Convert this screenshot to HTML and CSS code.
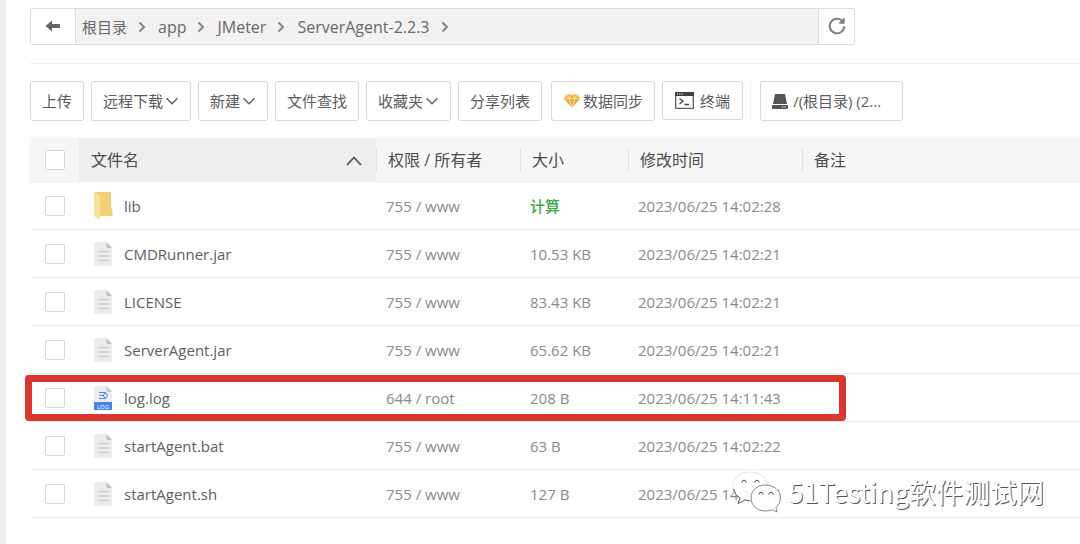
FILE: index.html
```html
<!DOCTYPE html>
<html lang="zh-CN">
<head>
<meta charset="utf-8">
<title>文件管理</title>
<link rel="stylesheet" href="styles.css">
</head>
<body>
<svg class="defs" width="0" height="0" aria-hidden="true">
  <symbol id="chevron-right" viewBox="0 0 8 12"><path d="M1.500 1.500 6 6 1.500 10.500" fill="none" stroke="#808080" stroke-width="1.900"/></symbol>
  <symbol id="chevron-down" viewBox="0 0 14 10"><path d="M1.500 2.200 7 7.700l5.500-5.500" fill="none" stroke="#666" stroke-width="1.600"/></symbol>
  <symbol id="file" viewBox="0 0 20 26"><path d="M1 1h12l6 6v18H1z" fill="#ececec"/><path d="M13 1l6 6h-5z" fill="#bcbcbc"/><path d="M5 10.500h11M5 15h11M5 19.500h11" stroke="#d0d0d0" stroke-width="1.300"/></symbol>
</svg>
<main class="page">
  <nav class="path" aria-label="路径">
    <button class="path-btn back" type="button" aria-label="返回"><svg width="16" height="12" viewBox="0 0 16 12"><path d="M0.500 6 7 .5v3.500h8v4H7v3.500z" fill="#666"/></svg></button>
    <ol class="crumbs">
      <li><a class="root" href="#">根目录</a><svg width="8" height="12"><use href="#chevron-right"/></svg></li>
      <li><a href="#">app</a><svg width="8" height="12"><use href="#chevron-right"/></svg></li>
      <li><a href="#">JMeter</a><svg width="8" height="12"><use href="#chevron-right"/></svg></li>
      <li><a href="#">ServerAgent-2.2.3</a><svg width="8" height="12"><use href="#chevron-right"/></svg></li>
    </ol>
    <button class="path-btn reload" type="button" aria-label="刷新"><svg width="20" height="20" viewBox="0 0 20 20"><path d="M15.500 5.200A7.300 7.300 0 1 0 17.300 10.300" fill="none" stroke="#808080" stroke-width="2"/><path d="M17.200 2.200v5h-5z" fill="#808080" stroke="#808080"/></svg></button>
  </nav>

  <div class="toolbar">
    <button class="btn" type="button">上传</button>
    <button class="btn" type="button">远程下载<svg width="14" height="10"><use href="#chevron-down"/></svg></button>
    <button class="btn" type="button">新建<svg width="14" height="10"><use href="#chevron-down"/></svg></button>
    <button class="btn" type="button">文件查找</button>
    <button class="btn" type="button">收藏夹<svg width="14" height="10"><use href="#chevron-down"/></svg></button>
    <button class="btn" type="button">分享列表</button>
    <span class="group">
      <button class="btn" type="button"><svg width="18" height="14" viewBox="0 0 18 14"><path d="M4 .5h10l3.500 4L9 13.800.5 4.500z" fill="#eeb13c"/><path d="M.5 4.500h17M4 .5l2 4 3 9 3-9 2-4M6 4.500l3-4 3 4" fill="none" stroke="#fbe3ae" stroke-width=".8"/></svg>数据同步</button>
      <button class="btn terminal" type="button"><svg width="19" height="17" viewBox="0 0 19 17"><path d="M.7.700h17.600v15.600H.7z" fill="#fff" stroke="#5a5f66" stroke-width="1.300"/><path d="M0 0h19v4H0z" fill="#3c3f44"/><path d="M2 2h1.200M4.200 2h1.200M6.400 2h1.200" stroke="#fff"/><path d="M4.500 6.500 8 9.300l-3.500 2.800M9.500 12.500H14" fill="none" stroke="#444" stroke-width="1.300"/></svg>终端</button>
    </span>
    <span class="disk">
      <button class="btn drive" type="button"><svg width="16" height="15" viewBox="0 0 16 15"><path d="M3 0h10l2 10H1z" fill="#555"/><path d="M1 11h14q1 0 1 1v2q0 1-1 1H1q-1 0-1-1v-2q0-1 1-1z" fill="#555"/><path d="M10 13h1.300M12.500 13h1.300" stroke="#fff"/></svg>/(根目录) (2...</button>
    </span>
  </div>

  <div class="files">
    <table>
      <colgroup><col class="c-check"><col class="c-name"><col class="c-perm"><col class="c-size"><col class="c-time"><col></colgroup>
      <thead>
        <tr>
          <th><input type="checkbox" aria-label="全选"></th>
          <th class="sorted"><span class="sort">文件名<svg width="20" height="12" viewBox="0 0 20 12"><path d="M3 11 10 3.500l7 7.500" fill="none" stroke="#555" stroke-width="1.800"/></svg></span></th>
          <th class="div">权限 / 所有者</th><th class="div">大小</th><th class="div">修改时间</th><th class="div">备注</th>
        </tr>
      </thead>
      <tbody>
        <tr><td><input type="checkbox" aria-label="lib"></td><td><span class="name"><svg width="20" height="30" viewBox="0 0 20 30"><path d="M1 1h16q1 0 1 1v15l1.500 2v6H7z" fill="#f0d078"/><path d="M1 1l5 3.500q1 1 1 2V29l-6-4z" fill="#f9e19a"/></svg>lib</span></td><td>755 / www</td><td><a class="calc" href="#">计算</a></td><td>2023/06/25 14:02:28</td><td></td></tr>
        <tr><td><input type="checkbox" aria-label="CMDRunner.jar"></td><td><span class="name"><svg width="20" height="26"><use href="#file"/></svg>CMDRunner.jar</span></td><td>755 / www</td><td>10.53 KB</td><td>2023/06/25 14:02:21</td><td></td></tr>
        <tr><td><input type="checkbox" aria-label="LICENSE"></td><td><span class="name"><svg width="20" height="26"><use href="#file"/></svg>LICENSE</span></td><td>755 / www</td><td>83.43 KB</td><td>2023/06/25 14:02:21</td><td></td></tr>
        <tr><td><input type="checkbox" aria-label="ServerAgent.jar"></td><td><span class="name"><svg width="20" height="26"><use href="#file"/></svg>ServerAgent.jar</span></td><td>755 / www</td><td>65.62 KB</td><td>2023/06/25 14:02:21</td><td></td></tr>
        <tr><td><input type="checkbox" aria-label="log.log"></td><td><span class="name"><svg width="20" height="26" viewBox="0 0 20 26"><path d="M1 1h12l6 6v10H1z" fill="#ececec"/><path d="M13 1l6 6h-5z" fill="#c4c4c4"/><path d="M6 7.500h7M6 10.500h5M6 13.500h7" stroke="#4d86e0" stroke-width="1.200"/><circle cx="12.500" cy="10.500" r="2" fill="none" stroke="#4d86e0"/><path d="M1 17h18v8H1z" fill="#4485ea"/><text class="badge" x="10" y="23.500" text-anchor="middle">LOG</text></svg>log.log</span></td><td>644 / root</td><td>208 B</td><td>2023/06/25 14:11:43</td><td></td></tr>
        <tr><td><input type="checkbox" aria-label="startAgent.bat"></td><td><span class="name"><svg width="20" height="26"><use href="#file"/></svg>startAgent.bat</span></td><td>755 / www</td><td>63 B</td><td>2023/06/25 14:02:22</td><td></td></tr>
        <tr><td><input type="checkbox" aria-label="startAgent.sh"></td><td><span class="name"><svg width="20" height="26"><use href="#file"/></svg>startAgent.sh</span></td><td>755 / www</td><td>127 B</td><td>2023/06/25 14:11:15</td><td></td></tr>
      </tbody>
    </table>
    <div class="highlight"></div>
  </div>
</main>
<div class="watermark">
  <svg width="50" height="42" viewBox="0 0 50 42"><path d="M17.500 1C8 1 1 7 1 15c0 5 2.500 9 7 12l-2 5.500 7-3.500q3 1 7 .8L36 14C34 6 27 1 17.500 1z" fill="#fff" fill-opacity=".9" stroke="#ccc" stroke-width=".5"/><path d="M1.500 18q1 5.500 6.500 9l-2 5.500 7-3.500 5 .8" fill="none" stroke="#555" stroke-width=".9"/><path d="M33.500 14C25 14 19 19.500 19 27s6.500 13 14.500 13q4 0 7-1.200l4.500 2.200-1-4.500q4.500-4 4.500-9.500C48.500 19.500 42 14 33.500 14z" fill="#fff" fill-opacity=".9" stroke="#666" stroke-width=".8"/><g fill="none" stroke="#444"><path d="M10 11.500v-1q2-3 4 0v1M23 11.500v-1q2-3 4 0v1M27 23.500v-1q2-3 4 0v1M37 23.500v-1q2-3 4 0v1"/></g></svg>
  <span>51Testing软件测试网</span>
</div>
</body>
</html>
```
FILE: styles.css
```css
* { box-sizing: border-box; }

body {
  margin: 0;
  min-height: 100vh;
  position: relative;
  background: #fefefe;
  border-left: 6px solid #f0f0f0;
  color: #5c5c5c;
  font: 15px/20px "Open Sans", "Noto Sans CJK SC", sans-serif;
}

svg { display: block; flex: none; }
.defs { position: absolute; }
a { color: inherit; text-decoration: none; }

button {
  font: inherit;
  color: inherit;
  background: #fff;
  cursor: pointer;
}

.page { padding: 8px 0 0 24px; }

.path {
  display: flex;
  width: 825px;
  max-width: 100%;
  height: 37px;
  border: 1px solid #dcdcdc;
  border-radius: 2px;
  background: #f2f2f2;
}

.path-btn {
  display: flex;
  align-items: center;
  justify-content: center;
  padding: 0 0 2px;
  border: 0;
}

.back { width: 45px; border-right: 1px solid #dcdcdc; }
.reload { width: 36px; border-left: 1px solid #dcdcdc; }

.crumbs {
  display: flex;
  flex: 1;
  align-items: center;
  gap: 12px;
  margin: 0;
  padding: 0 6px;
  list-style: none;
  font-size: 16px;
  color: #686868;
}

.crumbs li { display: flex; align-items: center; gap: 11px; }
.root { font-size: 15px; }

.toolbar {
  display: flex;
  gap: 7px;
  margin-top: 18px;
  padding: 17px 0;
  border-top: 1px solid #eee;
}

.btn {
  display: flex;
  align-items: center;
  gap: 2px;
  height: 40px;
  padding: 0 11px;
  border: 1px solid #d9d9d9;
  border-radius: 3px;
  white-space: nowrap;
}

.group { display: flex; gap: 7px; margin-left: 2px; }
.terminal { gap: 6px; height: 39px; padding: 0 12px; }
.disk { padding-left: 9px; border-left: 1px solid #f0f0f0; }
.drive { gap: 5px; width: 143px; }

.files { position: relative; }

table { width: 100%; border-collapse: separate; border-spacing: 0; table-layout: fixed; }
.c-check { width: 49px; }
.c-name { width: 297px; }
.c-perm { width: 144px; }
.c-size { width: 108px; }
.c-time { width: 174px; }

th {
  height: 44px;
  padding: 0 12px;
  background: #f6f6f6;
  border-bottom: 1px solid #ececec;
  text-align: left;
  font-size: 16px;
  font-weight: 400;
  color: #4c4c4c;
}

th.sorted { background: #eee; }
.div { background: linear-gradient(#e2e2e2, #e2e2e2) 0 50% / 1px 24px no-repeat #f6f6f6; }
.sort { display: flex; align-items: center; justify-content: space-between; }

td {
  height: 48px;
  padding: 0 10px;
  border-bottom: 1px solid #ececec;
  font-size: 15px;
  color: #8a8a8a;
}

th:first-child, td:first-child { padding: 0 15px; }

.name { display: flex; align-items: center; gap: 11px; padding-left: 4px; color: #606060; }
.calc { color: #3fa648; font-weight: 500; }
.badge { fill: #fff; font-size: 6px; }

input[type="checkbox"] {
  appearance: none;
  display: block;
  width: 20px;
  height: 20px;
  margin: 0;
  border: 1px solid #d8d8d8;
  border-radius: 2px;
  background: #fff;
}

.highlight {
  position: absolute;
  top: 237px;
  left: -5px;
  width: 821px;
  height: 46px;
  border: 7px solid #d93630;
  border-radius: 4px;
  pointer-events: none;
}

.watermark {
  position: absolute;
  right: 36px;
  bottom: 31px;
  display: flex;
  align-items: center;
  gap: 7px;
  font: 27px/42px "Noto Sans CJK SC", sans-serif;
  color: #fff;
  text-shadow: 1px 1px 0 #555;
  pointer-events: none;
}
```
